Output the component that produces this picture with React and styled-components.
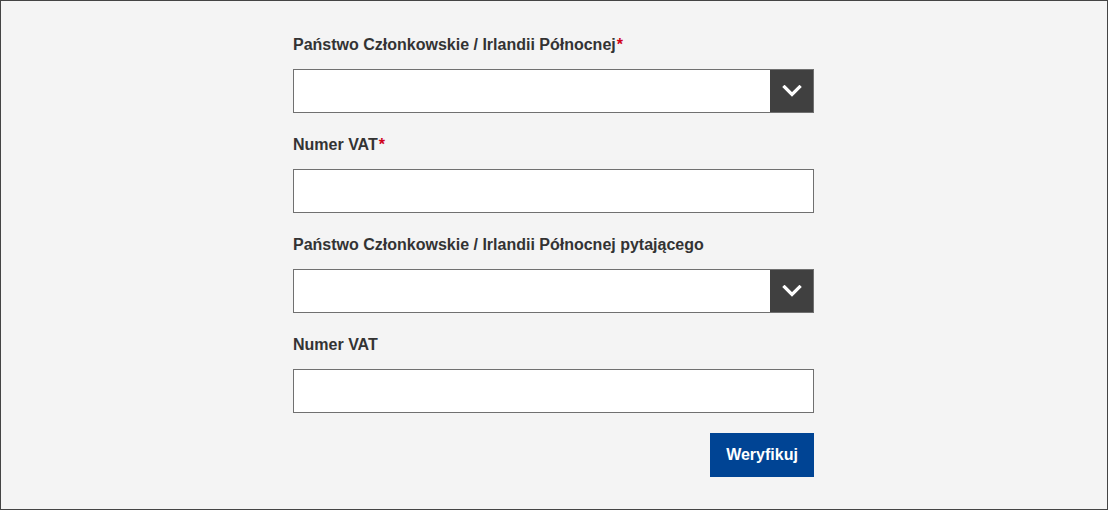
import styled, { createGlobalStyle } from "styled-components";

const GlobalStyle = createGlobalStyle`
  html, body {
    margin: 0;
    padding: 0;
  }
  body {
    font-family: Arial, "Liberation Sans", Helvetica, sans-serif;
    background: #f4f4f4;
  }
  * {
    box-sizing: border-box;
  }
`;

const Page = styled.div`
  height: 510px;
  border: 1px solid #444;
  background: #f4f4f4;
  padding: 34px 1px 0 0;
`;

const Form = styled.form`
  width: 521px;
  margin: 0 auto;
  display: flex;
  flex-direction: column;
  gap: 22px;
`;

const Group = styled.div`
  display: flex;
  flex-direction: column;
  gap: 14px;
`;

const Label = styled.label`
  font-size: 16px;
  line-height: 20px;
  font-weight: bold;
  color: #333;
`;

const Required = styled.span`
  color: #d0021b;
  margin-left: 1px;
`;

const TextInput = styled.input`
  height: 44px;
  width: 100%;
  border: 1px solid #707070;
  background: #fff;
  margin: 0;
  padding: 0 12px;
  font: inherit;
  font-size: 16px;
`;

const SelectWrap = styled.div`
  display: flex;
  height: 44px;
  border: 1px solid #707070;
  background: #fff;
`;

const SelectBox = styled.select`
  flex: 1;
  appearance: none;
  border: 0;
  background: transparent;
  font: inherit;
  font-size: 16px;
  padding: 0 12px;
  outline: none;
`;

const Arrow = styled.span`
  width: 43px;
  background: #404040;
  display: flex;
  align-items: center;
  justify-content: center;
`;

const Actions = styled.div`
  display: flex;
  justify-content: flex-end;
  margin-top: -2px;
`;

const Button = styled.button`
  height: 44px;
  width: 104px;
  border: 0;
  background: #004494;
  color: #fff;
  font: inherit;
  font-size: 16px;
  font-weight: bold;
  cursor: pointer;
`;

function Chevron() {
  return (
    <svg width="20" height="12" viewBox="0 0 20 12">
      <path
        d="M2.5 2 L10 9.5 L17.5 2"
        fill="none"
        stroke="#fff"
        strokeWidth="3.2"
        strokeLinecap="square"
      />
    </svg>
  );
}

function Field({ label, required, select }) {
  return (
    <Group>
      <Label>
        {label}
        {required && <Required>*</Required>}
      </Label>
      {select ? (
        <SelectWrap>
          <SelectBox>
            <option value=""></option>
          </SelectBox>
          <Arrow>
            <Chevron />
          </Arrow>
        </SelectWrap>
      ) : (
        <TextInput type="text" />
      )}
    </Group>
  );
}

export default function App() {
  return (
    <>
      <GlobalStyle />
      <Page>
        <Form onSubmit={(e) => e.preventDefault()}>
          <Field label="Państwo Członkowskie / Irlandii Północnej" required select />
          <Field label="Numer VAT" required />
          <Field label="Państwo Członkowskie / Irlandii Północnej pytającego" select />
          <Field label="Numer VAT" />
          <Actions>
            <Button type="submit">Weryfikuj</Button>
          </Actions>
        </Form>
      </Page>
    </>
  );
}
